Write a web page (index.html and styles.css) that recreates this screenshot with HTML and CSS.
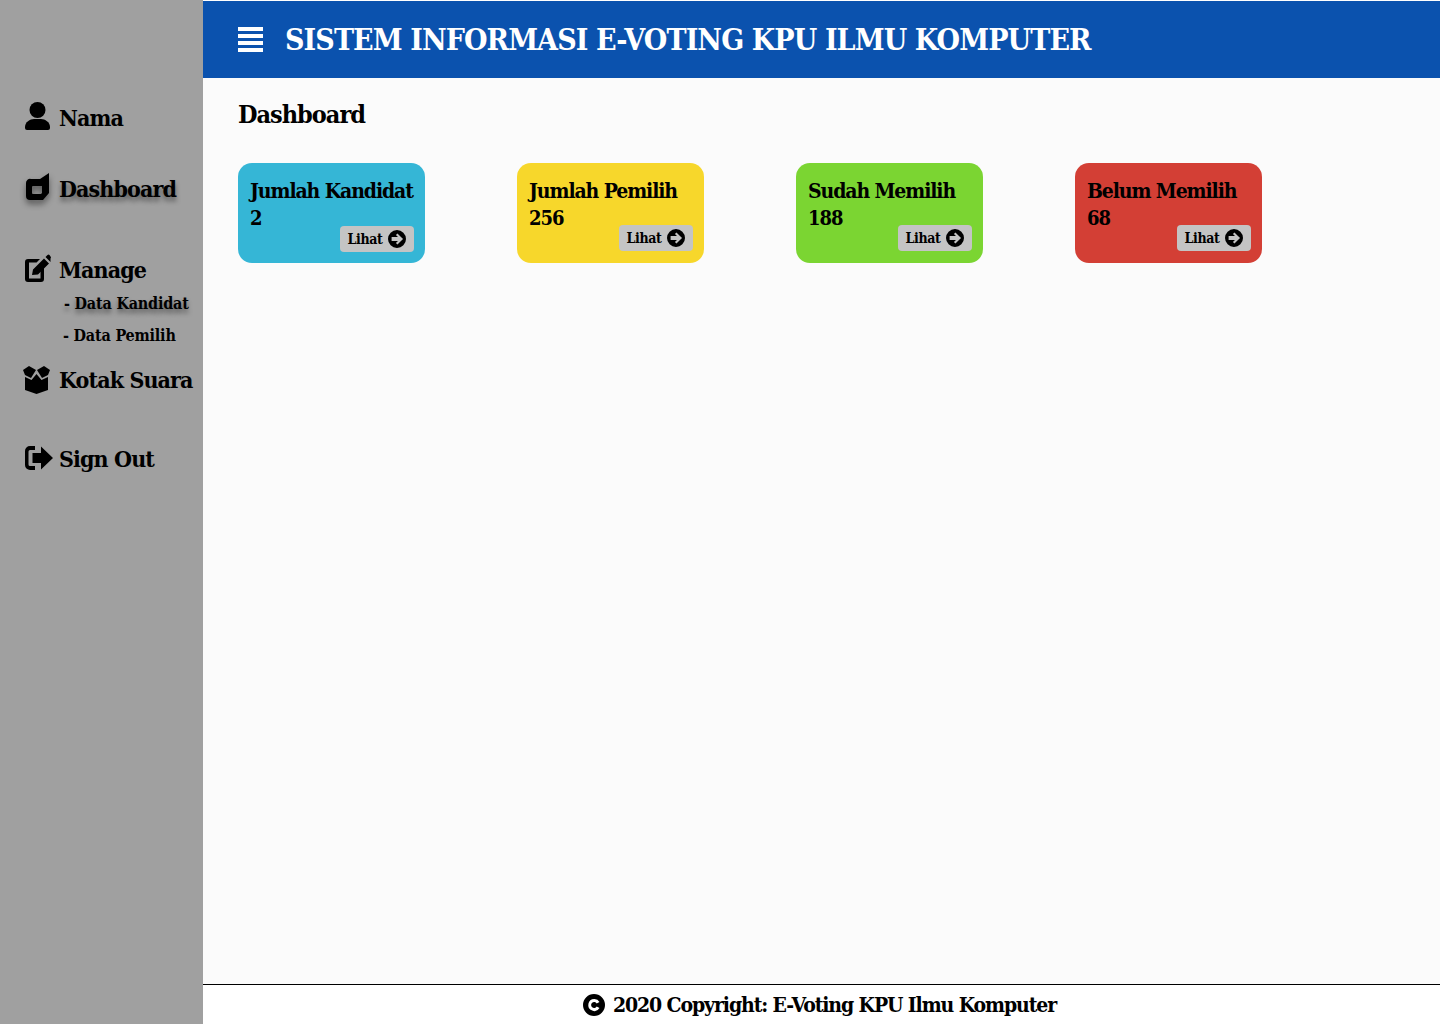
FILE: index.html
```html
<!DOCTYPE html>
<html lang="id">
<head>
<meta charset="utf-8">
<title>Sistem Informasi E-Voting</title>
<link rel="stylesheet" href="styles.css">
</head>
<body>
<div class="app">
  <aside class="sidebar">
    <a class="nav nav-nama">
      <svg class="ico" viewBox="0 0 26 28"><circle cx="12.500" cy="8" r="8"/><path d="M0 25C0 20 5 17 9 17H16C20 17 25 20 25 25V26A2 2 0 0 1 23 28H2A2 2 0 0 1 0 26Z"/></svg>
      <span>Nama</span>
    </a>
    <a class="nav nav-dash shadow">
      <svg class="ico" viewBox="0 0 26 28"><path fill-rule="evenodd" d="M6 6H15L24 0V20L18 27H5A4 4 0 0 1 1 23V10A4 4 0 0 1 6 6ZM8 13A1 1 0 0 0 7 14V20A1 1 0 0 0 8 21H16L17 20V13Z"/></svg>
      <span>Dashboard</span>
    </a>
    <a class="nav nav-manage">
      <svg class="ico" viewBox="0 0 26 28"><path d="M3 5H15L11.500 8.500H4V24.500H15.500V16L19 12.500V25A3 3 0 0 1 16 28H3A3 3 0 0 1 0 25V8A3 3 0 0 1 3 5Z"/><path d="M7 21L8 15.500L19 4.500L24 9.500L13 20.500ZM20.500 3L22.500 1A1.500 1.500 0 0 1 24.500 1L25.500 2.500A1.500 1.500 0 0 1 25.500 4.500L25.500 8Z"/></svg>
      <span>Manage</span>
    </a>
    <a class="sub sub-first shadow">- Data Kandidat</a>
    <a class="sub sub-second">- Data Pemilih</a>
    <a class="nav nav-kotak">
      <svg class="ico ico-box" viewBox="0 0 28 28"><path d="M0 4L6 0L13 4L8 12L2 9ZM27 4L21 0L14 4L19 12L25 9Z"/><path d="M2 11L8.500 14L13.500 8L18.500 14L25 11V24L13.500 28L2 24Z"/></svg>
      <span>Kotak Suara</span>
    </a>
    <a class="nav nav-out">
      <svg class="ico ico-out" viewBox="0 0 28 24"><path d="M10 0V4H5A1.500 1.500 0 0 0 3.500 5.500V18.500A1.500 1.500 0 0 0 5 20H10V24H5A5 5 0 0 1 0 19V5A5 5 0 0 1 5 0Z"/><path d="M16 0.500L28 12L16 23.500V17H7.500V7H16Z"/></svg>
      <span>Sign Out</span>
    </a>
  </aside>
  <div class="main">
    <header class="topbar">
      <svg class="menu" viewBox="0 0 25 25"><path d="M0 0H25V4H0ZM0 7H25V11H0ZM0 14H25V18H0ZM0 21H25V25H0Z"/></svg>
      <h1 class="brand">SISTEM INFORMASI E-VOTING KPU ILMU KOMPUTER</h1>
    </header>
    <main class="content">
      <h2 class="title">Dashboard</h2>
      <section class="cards">
        <article class="card blue">
          <div class="card-text">Jumlah Kandidat<br><span class="num">2</span></div>
          <a class="btn"><span>Lihat</span><svg class="arrow" viewBox="0 0 20 20"><path fill-rule="evenodd" d="M10 0a10 10 0 1 1 0 20a10 10 0 0 1 0-20ZM10.500 3.800L8.800 5.500L11.100 7.800H4V12.200H11.100L8.800 14.500L10.500 16.200L16.700 10Z"/></svg></a>
        </article>
        <article class="card yellow">
          <div class="card-text">Jumlah Pemilih<br><span class="num">256</span></div>
          <a class="btn"><span>Lihat</span><svg class="arrow" viewBox="0 0 20 20"><path fill-rule="evenodd" d="M10 0a10 10 0 1 1 0 20a10 10 0 0 1 0-20ZM10.500 3.800L8.800 5.500L11.100 7.800H4V12.200H11.100L8.800 14.500L10.500 16.200L16.700 10Z"/></svg></a>
        </article>
        <article class="card green">
          <div class="card-text">Sudah Memilih<br><span class="num">188</span></div>
          <a class="btn"><span>Lihat</span><svg class="arrow" viewBox="0 0 20 20"><path fill-rule="evenodd" d="M10 0a10 10 0 1 1 0 20a10 10 0 0 1 0-20ZM10.500 3.800L8.800 5.500L11.100 7.800H4V12.200H11.100L8.800 14.500L10.500 16.200L16.700 10Z"/></svg></a>
        </article>
        <article class="card red">
          <div class="card-text">Belum Memilih<br><span class="num">68</span></div>
          <a class="btn"><span>Lihat</span><svg class="arrow" viewBox="0 0 20 20"><path fill-rule="evenodd" d="M10 0a10 10 0 1 1 0 20a10 10 0 0 1 0-20ZM10.500 3.800L8.800 5.500L11.100 7.800H4V12.200H11.100L8.800 14.500L10.500 16.200L16.700 10Z"/></svg></a>
        </article>
      </section>
    </main>
    <footer class="footer">
      <svg class="copy" viewBox="0 0 22 22"><path fill-rule="evenodd" d="M11 0a11 11 0 1 1 0 22a11 11 0 0 1 0-22ZM11.500 5A6 6 0 1 0 16.500 14L13.700 12.500A3 3 0 1 1 13.700 9.500L16.500 8A6 6 0 0 0 11.500 5Z"/></svg>
      <span>2020 Copyright: E-Voting KPU Ilmu Komputer</span>
    </footer>
  </div>
</div>
</body>
</html>
```
FILE: styles.css
```css
* { box-sizing: border-box; }
html, body { margin: 0; height: 100%; }
body {
  font-family: "DejaVu Serif", "Liberation Serif", serif;
  font-stretch: condensed;
  font-weight: 700;
  color: #000;
  background: #fff;
}
.app { display: grid; grid-template-columns: 203px 1fr; height: 1024px; overflow: hidden; }
.sidebar { background: #a0a0a0; display: flex; flex-direction: column; padding-top: 103px; }
.nav { display: flex; align-items: center; font-size: 23px; letter-spacing: -0.9px; line-height: 30px; padding-left: 25px; height: 30px; }
.nav span { margin-left: 8px; }
.ico { width: 26px; height: 28px; flex: none; fill: #000; margin-top: -4px; }
.nav-dash { margin-top: 41px; }
.nav-manage { margin-top: 51px; }
.shadow { text-shadow: 0 4px 5px rgba(0,0,0,.45); }
.shadow .ico { filter: drop-shadow(0 4px 3px rgba(0,0,0,.45)); }
.sub { display: block; font-size: 16px; letter-spacing: -0.2px; line-height: 22px; }
.sub-first { margin-top: 8px; padding-left: 64px; }
.sub-second { margin-top: 10px; padding-left: 63px; }
.nav-kotak { margin-top: 18px; padding-left: 23px; }
.nav-kotak span { margin-left: 8px; }
.ico-box { width: 28px; margin-top: 0; }
.nav-out { margin-top: 49px; }
.ico-out { width: 28px; height: 24px; margin-top: -2px; }
.nav-out span { margin-left: 6px; }
.main { display: flex; flex-direction: column; min-width: 0; padding-top: 1px; background: #fff; }
.topbar { height: 77px; flex: none; background: #0b52ae; display: flex; align-items: center; padding-left: 35px; color: #fff; }
.menu { width: 25px; height: 25px; fill: #fff; flex: none; }
.brand { margin: 0 0 0 22px; font-size: 30px; letter-spacing: -0.9px; font-weight: 700; white-space: nowrap; }
.content { flex: 1; background: #fbfbfb; padding: 22px 35px 0; }
.title { margin: 0; font-size: 25px; letter-spacing: -1px; line-height: 30px; font-weight: 700; }
.cards { display: flex; gap: 92px; margin-top: 33px; }
.card { width: 187px; height: 100px; border-radius: 14px; position: relative; padding: 14px 11px 0 12px; font-size: 21px; letter-spacing: -1.1px; line-height: 27px; }
.card-text { white-space: nowrap; }
.num { font-size: 20px; letter-spacing: -1px; }
.blue { background: #35b6d6; }
.yellow { background: #f7d72b; }
.green { background: #7bd532; }
.red { background: #d33f35; }
.btn { position: absolute; right: 11px; bottom: 12px; width: 74px; height: 26px; border-radius: 4px; background: #c4c4c4; display: flex; align-items: center; justify-content: center; gap: 6px; font-size: 14px; letter-spacing: -0.4px; }
.blue .btn { bottom: 11px; }
.arrow { width: 18px; height: 18px; fill: #000; }
.footer { height: 40px; flex: none; border-top: 1px solid #000; background: #fff; display: flex; align-items: center; justify-content: center; gap: 8px; padding-right: 4px; font-size: 21px; letter-spacing: -1.1px; }
.copy { width: 22px; height: 22px; fill: #000; }
```
